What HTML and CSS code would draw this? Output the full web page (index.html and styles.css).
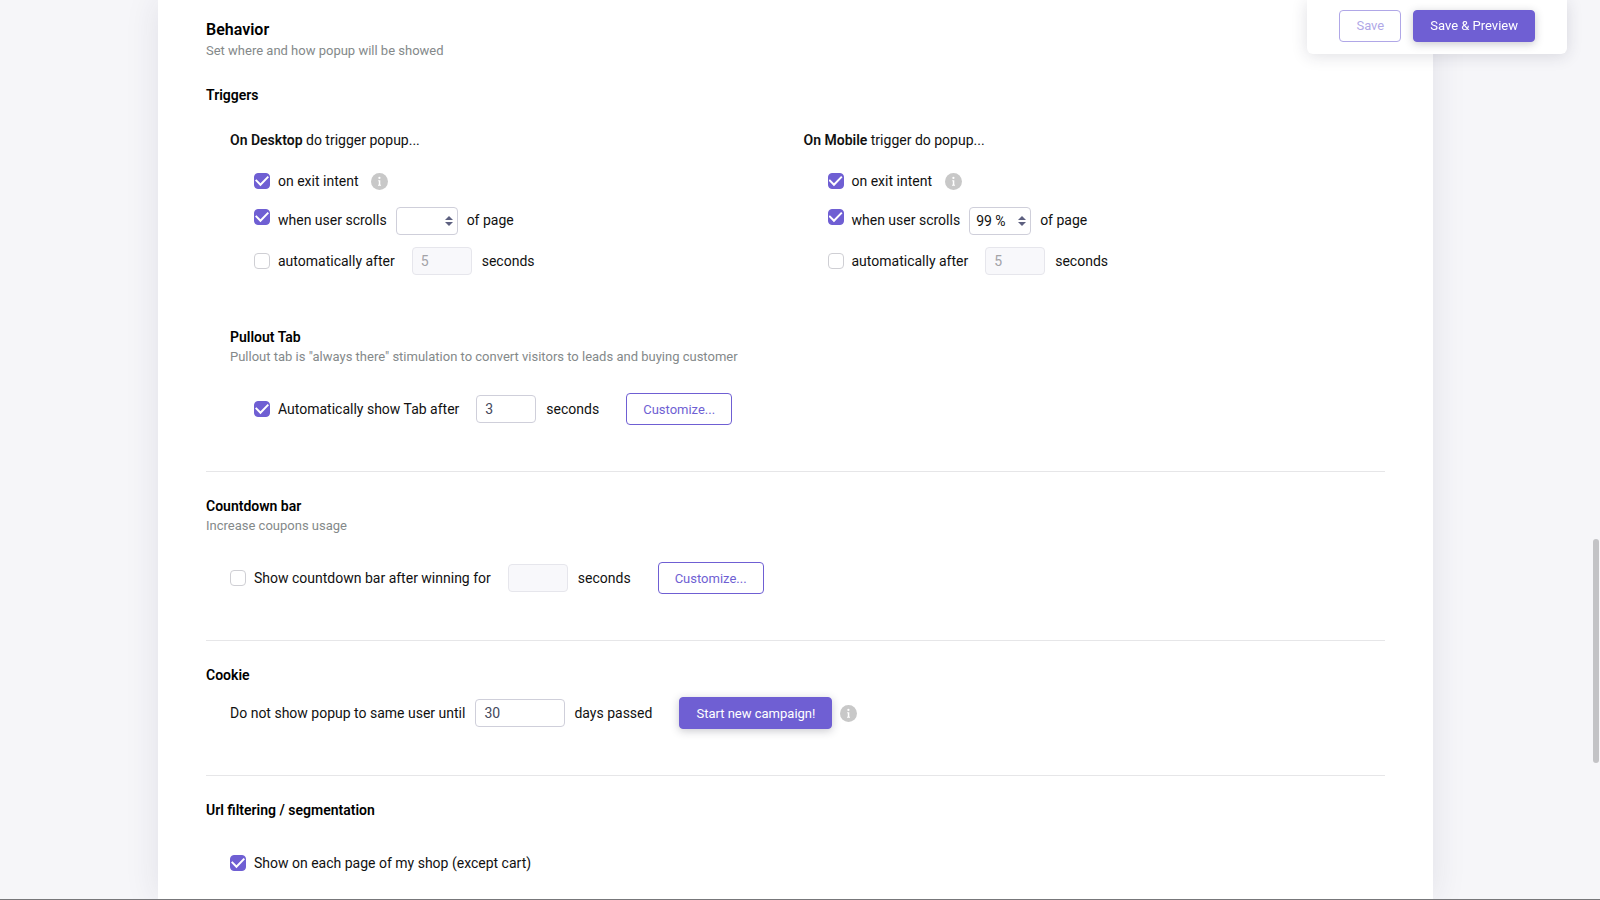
FILE: index.html
```html
<!DOCTYPE html>
<html lang="en">

<head>
    <meta charset="UTF-8">
    <meta name="viewport" content="width=device-width, initial-scale=1.0">
    <title>Popup settings</title>
    <link rel="stylesheet" href="styles.css">
</head>

<body>
    <!-- shared icons -->
    <svg class="sprite" aria-hidden="true">
        <symbol id="icon-info" viewBox="0 0 17 17">
            <circle cx="8.5" cy="8.5" r="8.5" fill="#c8c8c8" />
            <circle cx="8.4" cy="4.9" r="1.1" fill="#fff" />
            <path d="M7.2 7.2h2.1v4.6h.7v1H7v-1h.8V8.2h-.6z" fill="#fff" />
        </symbol>
        <symbol id="icon-sort" viewBox="0 0 8 10">
            <path d="M4 0l4 4H0zM4 10L0 6h8z" fill="#5d6080" />
        </symbol>
    </svg>

    <div class="save-bar">
        <button type="button" class="btn btn-outline btn-save" disabled>Save</button>
        <button type="button" class="btn btn-primary">Save &amp; Preview</button>
    </div>

    <main class="card">
        <section class="section">
            <h2 class="title title-lg">Behavior</h2>
            <p class="hint">Set where and how popup will be showed</p>

            <h3 class="title triggers-title">Triggers</h3>
            <div class="triggers">
                <div class="trigger">
                    <p class="trigger-title"><b>On Desktop</b> do trigger popup...</p>
                    <div class="row row-nested">
                        <input type="checkbox" class="check" id="desktop-exit" checked>
                        <label for="desktop-exit">on exit intent</label>
                        <svg class="info info-spaced"><use href="#icon-info" /></svg>
                    </div>
                    <div class="row row-nested row-scroll">
                        <input type="checkbox" class="check" id="desktop-scroll" checked>
                        <label for="desktop-scroll">when user scrolls</label>
                        <span class="select-wrap">
                            <select class="field" aria-label="Scrolled part of page on desktop">
                                <option selected></option>
                                <option>50 %</option>
                                <option>99 %</option>
                            </select>
                            <svg class="sort"><use href="#icon-sort" /></svg>
                        </span>
                        <span class="unit">of page</span>
                    </div>
                    <div class="row row-nested">
                        <input type="checkbox" class="check" id="desktop-auto">
                        <label for="desktop-auto">automatically after</label>
                        <input type="text" class="field field-num" value="5" aria-label="Seconds on desktop" disabled>
                        <span class="unit">seconds</span>
                    </div>
                </div>

                <div class="trigger">
                    <p class="trigger-title"><b>On Mobile</b> trigger do popup...</p>
                    <div class="row row-nested">
                        <input type="checkbox" class="check" id="mobile-exit" checked>
                        <label for="mobile-exit">on exit intent</label>
                        <svg class="info info-spaced"><use href="#icon-info" /></svg>
                    </div>
                    <div class="row row-nested row-scroll">
                        <input type="checkbox" class="check" id="mobile-scroll" checked>
                        <label for="mobile-scroll">when user scrolls</label>
                        <span class="select-wrap">
                            <select class="field" aria-label="Scrolled part of page on mobile">
                                <option>50 %</option>
                                <option selected>99 %</option>
                            </select>
                            <svg class="sort"><use href="#icon-sort" /></svg>
                        </span>
                        <span class="unit">of page</span>
                    </div>
                    <div class="row row-nested">
                        <input type="checkbox" class="check" id="mobile-auto">
                        <label for="mobile-auto">automatically after</label>
                        <input type="text" class="field field-num" value="5" aria-label="Seconds on mobile" disabled>
                        <span class="unit">seconds</span>
                    </div>
                </div>
            </div>

            <div class="pullout">
                <h3 class="title">Pullout Tab</h3>
                <p class="hint">Pullout tab is "always there" stimulation to convert visitors to leads and buying customer</p>
                <div class="row row-nested row-action">
                    <input type="checkbox" class="check" id="pullout-auto" checked>
                    <label for="pullout-auto">Automatically show Tab after</label>
                    <input type="text" class="field field-num" value="3" aria-label="Seconds before tab">
                    <span class="unit">seconds</span>
                    <button type="button" class="btn btn-outline btn-row">Customize...</button>
                </div>
            </div>
        </section>

        <section class="section">
            <h3 class="title">Countdown bar</h3>
            <p class="hint">Increase coupons usage</p>
            <div class="row row-nested row-action">
                <input type="checkbox" class="check" id="countdown">
                <label for="countdown">Show countdown bar after winning for</label>
                <input type="text" class="field field-num" aria-label="Countdown seconds" disabled>
                <span class="unit">seconds</span>
                <button type="button" class="btn btn-outline btn-row">Customize...</button>
            </div>
        </section>

        <section class="section">
            <h3 class="title">Cookie</h3>
            <div class="row row-nested row-cookie">
                <label for="cookie-days">Do not show popup to same user until</label>
                <input type="text" class="field field-days" id="cookie-days" value="30">
                <span class="unit">days passed</span>
                <button type="button" class="btn btn-primary btn-row">Start new campaign!</button>
                <svg class="info"><use href="#icon-info" /></svg>
            </div>
        </section>

        <section class="section">
            <h3 class="title">Url filtering / segmentation</h3>
            <div class="row row-nested row-url">
                <input type="checkbox" class="check" id="each-page" checked>
                <label for="each-page">Show on each page of my shop (except cart)</label>
            </div>
        </section>
    </main>

    <div class="scroll-thumb"></div>
</body>

</html>
```

FILE: styles.css
```css
* {
    margin: 0;
    padding: 0;
    box-sizing: border-box;
}

body {
    display: flex;
    min-height: 100vh;
    padding: 0 167px 0 158px;
    background: #f6f6f9;
    border-bottom: 1px solid #77777a;
    font-family: Roboto, "Liberation Sans", sans-serif;
    font-size: 14px;
    line-height: 20px;
    color: #111;
}

.sprite {
    position: absolute;
    width: 0;
    height: 0;
}

/* main card */
.card {
    flex: 1;
    padding: 18px 48px 0;
    background: #fff;
    box-shadow: 0 0 32px rgba(40, 40, 80, 0.1);
}

.section + .section {
    border-top: 1px solid #e6e6e8;
    padding-top: 24px;
}

.title {
    font-size: 14px;
    font-weight: 600;
    color: #000;
}

.title-lg {
    font-size: 16px;
    line-height: 23px;
}

.hint {
    font-size: 13px;
    color: #84898a;
}

/* triggers */
.triggers-title {
    margin-top: 24px;
}

.triggers {
    display: grid;
    grid-template-columns: 1fr 1fr;
    margin-top: 25px;
    padding: 0 8px 0 24px;
}

.trigger b {
    font-weight: 600;
}

.trigger-title {
    margin-bottom: 17px;
}

/* form rows */
.row {
    display: flex;
    align-items: center;
    height: 28px;
    margin-bottom: 12px;
}

.row-nested {
    padding-left: 24px;
}

/* checkbox and texts sit a little above the select */
.row-scroll .check {
    margin-bottom: 8px;
}

.row-scroll label,
.row-scroll .unit {
    margin-bottom: 2px;
}

.check {
    flex: none;
    width: 16px;
    height: 16px;
    margin-right: 8px;
    appearance: none;
    background: #fff;
    border: 1px solid #cfcfd4;
    border-radius: 4px;
}

.check:checked {
    background: #6f5fd3;
    border-color: #6f5fd3;
}

.check:checked::before {
    content: "";
    display: block;
    width: 14px;
    height: 14px;
    background: #fff;
    clip-path: polygon(0 47%, 10% 37%, 39% 66%, 90% 14%, 100% 24%, 39% 87%);
}

.field {
    height: 28px;
    padding: 0 8px;
    background: #fff;
    border: 1px solid #cfcfda;
    border-radius: 4px;
    font-family: inherit;
    font-size: 14px;
    color: #44485c;
}

.field:disabled {
    background: #f8f8fb;
    border-color: #e6e6ec;
    color: #a3a3a8;
}

.field-num {
    width: 60px;
    margin: 0 10px 0 17px;
}

.field-days {
    width: 90px;
    margin: 0 9px 0 10px;
}

.select-wrap {
    position: relative;
    margin: 0 9px;
}

.select-wrap .field {
    display: block;
    width: 62px;
    padding: 0 6px;
    appearance: none;
    color: #111;
}

.sort {
    position: absolute;
    top: 9px;
    right: 5px;
    width: 8px;
    height: 10px;
    pointer-events: none;
}

.info {
    width: 17px;
    height: 17px;
    margin-left: 8px;
}

.info-spaced {
    margin-left: 13px;
}

/* buttons */
.btn {
    height: 32px;
    padding: 0 16px;
    border: 1px solid #6f5fd3;
    border-radius: 4px;
    font-family: inherit;
    font-size: 13px;
    white-space: nowrap;
}

.btn-outline {
    background: #fff;
    color: #6f5fd3;
}

.btn-primary {
    background: #6f5fd3;
    color: #fff;
    box-shadow: 0 2px 8px rgba(40, 40, 60, 0.25);
}

.btn-save {
    opacity: 0.55;
}

.btn-row {
    margin-left: 27px;
}

/* sections */
.pullout {
    margin-top: 40px;
    padding-left: 24px;
}

.row-action {
    margin: 28px 0 48px;
}

.row-cookie {
    margin: 14px 0 48px;
}

.row-url {
    margin: 29px 0 20px;
}

/* save panel */
.save-bar {
    position: fixed;
    top: 0;
    right: 33px;
    z-index: 2;
    display: flex;
    gap: 12px;
    padding: 10px 32px 12px;
    background: #fff;
    border-radius: 0 0 6px 6px;
    box-shadow: 0 2px 16px rgba(40, 40, 70, 0.15);
}

.save-bar .btn {
    padding-bottom: 2px;
}

.scroll-thumb {
    position: fixed;
    top: 539px;
    right: 1px;
    width: 6px;
    height: 224px;
    background: #c3c3c6;
    border-radius: 3px;
}
```
